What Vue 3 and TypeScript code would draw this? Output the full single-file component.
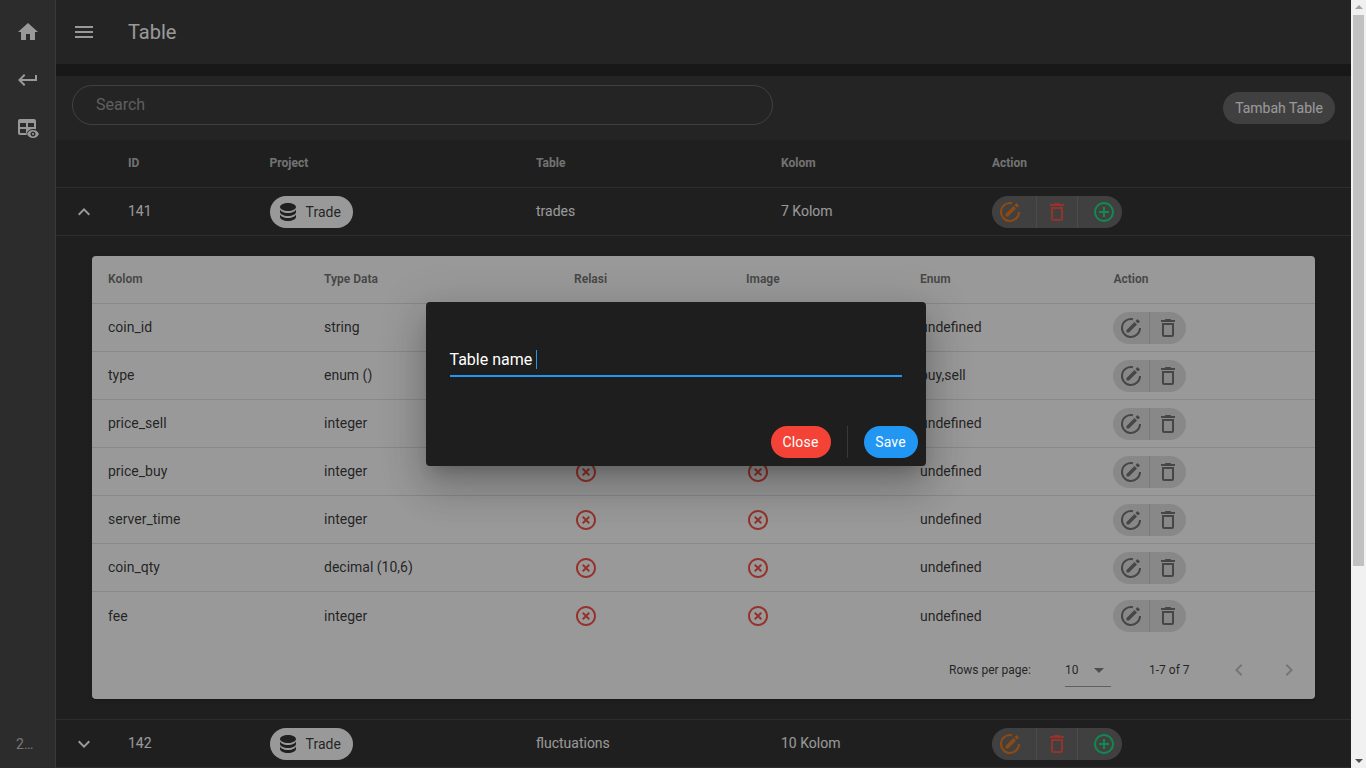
<script setup lang="ts">
interface Column { name: string; type: string; enumValue: string }

const icons = {
  home: 'M10,20V14H14V20H19V12H22L12,3L2,12H5V20H10Z',
  back: 'M19,7V11H5.83L9.41,7.41L8,6L2,12L8,18L9.41,16.59L5.83,13H21V7H19Z',
  tableEye: 'M4 3H18A2 2 0 0 1 20 5V13.2C19.1 13 18 12.9 17 12.9C14.3 12.9 12 14.4 10.7 17V19H4A2 2 0 0 1 2 17V5A2 2 0 0 1 4 3Z M4 7V11H10V7H4Z M12 7V11H18V7H12Z M4 13V17H10V13H4Z M17 16.88C17.56 16.88 18 17.32 18 17.88S17.56 18.88 17 18.88 16 18.44 16 17.88 16.44 16.88 17 16.88M17 14C14.27 14 11.94 15.66 11 18C11.94 20.34 14.27 22 17 22S22.06 20.34 23 18C22.06 15.66 19.73 14 17 14M17 20.5C15.62 20.5 14.5 19.38 14.5 18S15.62 15.5 17 15.5 19.5 16.62 19.5 18 18.38 20.5 17 20.5Z',
  menu: 'M3,6H21V8H3V6M3,11H21V13H3V11M3,16H21V18H3V16Z',
  up: 'M7.41,15.41L12,10.83L16.59,15.41L18,14L12,8L6,14L7.41,15.41Z',
  down: 'M7.41,8.58L12,13.17L16.59,8.58L18,10L12,16L6,10L7.41,8.58Z',
  left: 'M15.41,16.58L10.83,12L15.41,7.41L14,6L8,12L14,18L15.41,16.58Z',
  right: 'M8.59,16.58L13.17,12L8.59,7.41L10,6L16,12L10,18L8.59,16.58Z',
  menuDown: 'M7,10L12,15L17,10H7Z',
  database: 'M12,3C7.58,3 4,4.79 4,7C4,9.21 7.58,11 12,11C16.42,11 20,9.21 20,7C20,4.79 16.42,3 12,3M4,9V12C4,14.21 7.58,16 12,16C16.42,16 20,14.21 20,12V9C20,11.21 16.42,13 12,13C7.58,13 4,11.21 4,9M4,14V17C4,19.21 7.58,21 12,21C16.42,21 20,19.21 20,17V14C20,16.21 16.42,18 12,18C7.58,18 4,16.21 4,14Z',
  trash: 'M6,19A2,2 0 0,0 8,21H16A2,2 0 0,0 18,19V7H6V19M8,9H16V19H8V9M15.5,4L14.5,3H9.5L8.5,4H5V6H19V4H15.5Z',
  plus: 'M12,20C7.59,20 4,16.41 4,12C4,7.59 7.59,4 12,4C16.41,4 20,7.59 20,12C20,16.41 16.41,20 12,20M12,2A10,10 0 0,0 2,12A10,10 0 0,0 12,22A10,10 0 0,0 22,12A10,10 0 0,0 12,2M13,7H11V11H7V13H11V17H13V13H17V11H13V7Z',
  cross: 'M12,20C7.59,20 4,16.41 4,12C4,7.59 7.59,4 12,4C16.41,4 20,7.59 20,12C20,16.41 16.41,20 12,20M12,2C6.47,2 2,6.47 2,12C2,17.53 6.47,22 12,22C17.53,22 22,17.53 22,12C22,6.47 17.53,2 12,2M14.59,8L12,10.59L9.41,8L8,9.41L10.59,12L8,14.59L9.41,16L12,13.41L14.59,16L16,14.59L13.41,12L16,9.41L14.59,8Z',
  editArc: 'M14 3.2A9 9 0 1 0 21 12',
  editPen: 'M7.5 16.5V14L15.5 6L18 8.5L10 16.5Z M16.5 5L18.5 3L21 5.5L19 7.5Z',
}

const columns: Column[] = [
  { name: 'coin_id', type: 'string', enumValue: 'undefined' },
  { name: 'type', type: 'enum ()', enumValue: 'buy,sell' },
  { name: 'price_sell', type: 'integer', enumValue: 'undefined' },
  { name: 'price_buy', type: 'integer', enumValue: 'undefined' },
  { name: 'server_time', type: 'integer', enumValue: 'undefined' },
  { name: 'coin_qty', type: 'decimal (10,6)', enumValue: 'undefined' },
  { name: 'fee', type: 'integer', enumValue: 'undefined' },
]
</script>

<template>
  <div class="app">
    <div class="workspace">
      <nav class="rail">
        <div class="rail-top">
          <svg class="icon" viewBox="0 0 24 24"><path :d="icons.home" /></svg>
          <svg class="icon" viewBox="0 0 24 24"><path :d="icons.back" /></svg>
          <svg class="icon" viewBox="0 0 24 24"><path fill-rule="evenodd" :d="icons.tableEye" /></svg>
        </div>
        <div class="rail-version">2.0.1</div>
      </nav>

      <main class="main">
        <header class="toolbar">
          <svg class="icon" viewBox="0 0 24 24"><path :d="icons.menu" /></svg>
          <h1 class="title">Table</h1>
        </header>

        <section class="panel">
          <div class="filter">
            <div class="search">Search</div>
            <button class="add-btn" type="button">Tambah Table</button>
          </div>

          <table class="outer">
            <colgroup>
              <col class="o1" /><col class="o2" /><col class="o3" /><col class="o4" /><col class="o5" /><col />
            </colgroup>
            <thead>
              <tr>
                <th></th><th>ID</th><th>Project</th><th>Table</th><th>Kolom</th><th>Action</th>
              </tr>
            </thead>
            <tbody>
              <tr>
                <td><svg class="icon" viewBox="0 0 24 24"><path :d="icons.up" /></svg></td>
                <td>141</td>
                <td>
                  <span class="chip"><svg class="icon" viewBox="0 0 24 24"><path :d="icons.database" /></svg>Trade</span>
                </td>
                <td>trades</td>
                <td>7 Kolom</td>
                <td>
                  <div class="group">
                    <button class="g-btn g-first" type="button">
                      <svg class="icon orange" viewBox="0 0 24 24"><path class="arc" :d="icons.editArc" /><path :d="icons.editPen" /></svg>
                    </button>
                    <button class="g-btn g-mid" type="button">
                      <svg class="icon red" viewBox="0 0 24 24"><path :d="icons.trash" /></svg>
                    </button>
                    <button class="g-btn g-last" type="button">
                      <svg class="icon green" viewBox="0 0 24 24"><path :d="icons.plus" /></svg>
                    </button>
                  </div>
                </td>
              </tr>

              <tr>
                <td class="expanded" colspan="6">
                  <div class="card">
                    <table class="inner">
                      <colgroup>
                        <col class="i1" /><col class="i2" /><col class="i3" /><col class="i4" /><col class="i5" /><col />
                      </colgroup>
                      <thead>
                        <tr>
                          <th>Kolom</th><th>Type Data</th><th>Relasi</th><th>Image</th><th>Enum</th><th>Action</th>
                        </tr>
                      </thead>
                      <tbody>
                        <tr v-for="c in columns" :key="c.name">
                          <td>{{ c.name }}</td>
                          <td>{{ c.type }}</td>
                          <td><svg class="icon red" viewBox="0 0 24 24"><path :d="icons.cross" /></svg></td>
                          <td><svg class="icon red" viewBox="0 0 24 24"><path :d="icons.cross" /></svg></td>
                          <td>{{ c.enumValue }}</td>
                          <td>
                            <div class="group light">
                              <button class="g-btn l-first" type="button">
                                <svg class="icon" viewBox="0 0 24 24"><path class="arc" :d="icons.editArc" /><path :d="icons.editPen" /></svg>
                              </button>
                              <button class="g-btn l-last" type="button">
                                <svg class="icon" viewBox="0 0 24 24"><path :d="icons.trash" /></svg>
                              </button>
                            </div>
                          </td>
                        </tr>
                      </tbody>
                    </table>
                    <footer class="pager">
                      <span class="pager-label">Rows per page:</span>
                      <div class="pager-select">
                        <span>10</span>
                        <svg class="icon" viewBox="0 0 24 24"><path :d="icons.menuDown" /></svg>
                      </div>
                      <span class="pager-range">1-7 of 7</span>
                      <svg class="icon pager-nav" viewBox="0 0 24 24"><path :d="icons.left" /></svg>
                      <svg class="icon pager-nav pager-next" viewBox="0 0 24 24"><path :d="icons.right" /></svg>
                    </footer>
                  </div>
                </td>
              </tr>

              <tr>
                <td><svg class="icon" viewBox="0 0 24 24"><path :d="icons.down" /></svg></td>
                <td>142</td>
                <td>
                  <span class="chip"><svg class="icon" viewBox="0 0 24 24"><path :d="icons.database" /></svg>Trade</span>
                </td>
                <td>fluctuations</td>
                <td>10 Kolom</td>
                <td>
                  <div class="group">
                    <button class="g-btn g-first" type="button">
                      <svg class="icon orange" viewBox="0 0 24 24"><path class="arc" :d="icons.editArc" /><path :d="icons.editPen" /></svg>
                    </button>
                    <button class="g-btn g-mid" type="button">
                      <svg class="icon red" viewBox="0 0 24 24"><path :d="icons.trash" /></svg>
                    </button>
                    <button class="g-btn g-last" type="button">
                      <svg class="icon green" viewBox="0 0 24 24"><path :d="icons.plus" /></svg>
                    </button>
                  </div>
                </td>
              </tr>
            </tbody>
          </table>
        </section>
      </main>

      <div class="scrim">
        <div class="dialog">
          <div class="dialog-body">
            <div class="field">
              <span>Table name</span><span class="caret"></span>
            </div>
          </div>
          <div class="dialog-actions">
            <button class="d-btn d-close" type="button">Close</button>
            <span class="d-divider"></span>
            <button class="d-btn d-save" type="button">Save</button>
          </div>
        </div>
      </div>
    </div>

    <div class="scrollbar">
      <span class="arrow arrow-up"></span>
      <div class="track"><div class="thumb"></div></div>
      <span class="arrow arrow-down"></span>
    </div>
  </div>
</template>

<style>
body {
  margin: 0;
  background: #121212;
}
</style>

<style scoped>
.app {
  display: flex;
  height: 100vh;
  overflow: hidden;
  font-family: Roboto, "Liberation Sans", sans-serif;
  font-size: 14px;
  line-height: 1.5;
  color: #fff;
}
.workspace {
  position: relative;
  flex: 1;
  min-width: 0;
  display: flex;
}
.icon {
  display: block;
  width: 24px;
  height: 24px;
  fill: currentColor;
  flex: none;
}
.arc {
  fill: none;
  stroke: currentColor;
  stroke-width: 2;
}
.rail {
  flex: none;
  box-sizing: border-box;
  width: 56px;
  background: #363636;
  border-right: 1px solid rgba(255, 255, 255, 0.12);
  display: flex;
  flex-direction: column;
  justify-content: space-between;
}
.rail-top {
  display: flex;
  flex-direction: column;
  gap: 24px;
  padding: 20px 0 0 16px;
}
.rail-version {
  width: 17px;
  margin: 0 0 16px 16px;
  line-height: 16px;
  color: rgba(255, 255, 255, 0.7);
  overflow: hidden;
  white-space: nowrap;
  text-overflow: ellipsis;
}
.main {
  flex: 1;
  min-width: 0;
}
.toolbar {
  height: 64px;
  background: #272727;
  display: flex;
  align-items: center;
  padding-left: 16px;
  gap: 32px;
}
.title {
  margin: 0;
  font-size: 20px;
  font-weight: 400;
  line-height: 32px;
}
.panel {
  margin-top: 12px;
  background: #1e1e1e;
}
.filter {
  height: 64px;
  background: #272727;
  display: flex;
  justify-content: space-between;
  align-items: flex-start;
  padding: 0 16px;
}
.search {
  box-sizing: border-box;
  width: 701px;
  height: 40px;
  margin-top: 9px;
  padding-left: 23px;
  border: 1px solid rgba(255, 255, 255, 0.24);
  border-radius: 20px;
  font-size: 16px;
  line-height: 37px;
  color: rgba(255, 255, 255, 0.5);
}
.add-btn {
  width: 112px;
  height: 32px;
  margin-top: 16px;
  padding: 0;
  border: 0;
  border-radius: 16px;
  background: #5c5c5c;
  color: #fff;
  font: inherit;
}
table {
  width: 100%;
  border-collapse: separate;
  border-spacing: 0;
  table-layout: fixed;
}
th {
  box-sizing: border-box;
  height: 48px;
  padding: 0 16px 2px;
  text-align: left;
  font-size: 12px;
  font-weight: 700;
}
td {
  box-sizing: border-box;
  height: 48px;
  padding: 0 16px;
}
.outer > thead th {
  color: rgba(255, 255, 255, 0.7);
  border-bottom: 1px solid rgba(255, 255, 255, 0.12);
}
.outer > tbody > tr > td {
  border-bottom: 1px solid rgba(255, 255, 255, 0.12);
}
.o1 { width: 56px; }
.o2 { width: 141.6px; }
.o3 { width: 266.4px; }
.o4 { width: 245px; }
.o5 { width: 211px; }
.chip {
  display: inline-flex;
  align-items: center;
  gap: 6px;
  height: 32px;
  padding: 0 12px 0 6px;
  border-radius: 16px;
  background: #fff;
  color: rgba(0, 0, 0, 0.87);
  line-height: normal;
  vertical-align: middle;
}
.group {
  display: inline-flex;
  height: 32px;
  vertical-align: middle;
  border-radius: 16px;
  background: #5c5c5c;
}
.g-btn {
  display: flex;
  align-items: center;
  justify-content: center;
  box-sizing: border-box;
  height: 32px;
  padding: 0;
  border: 0;
  background: none;
  color: inherit;
}
.g-first { width: 45px; padding-right: 8px; border-right: 1px solid rgba(255, 255, 255, 0.12); }
.g-mid { width: 41px; border-right: 1px solid rgba(255, 255, 255, 0.12); }
.g-last { width: 44px; padding-left: 8px; }
.orange { color: #ef6c00; }
.red { color: #f44336; }
.green { color: #00e676; }
.outer > tbody > tr > td.expanded {
  height: 484px;
  padding: 20px 36px;
  vertical-align: top;
}
.card {
  background: #fff;
  border-radius: 4px;
  color: rgba(0, 0, 0, 0.87);
  box-shadow: 0 3px 1px -2px rgba(0, 0, 0, 0.2), 0 2px 2px 0 rgba(0, 0, 0, 0.14), 0 1px 5px 0 rgba(0, 0, 0, 0.12);
}
.i1 { width: 216px; }
.i2 { width: 250px; }
.i3 { width: 172px; }
.i4 { width: 174px; }
.i5 { width: 193.4px; }
.inner th {
  color: rgba(0, 0, 0, 0.6);
  border-bottom: 1px solid rgba(0, 0, 0, 0.12);
}
.inner tbody td {
  border-bottom: 1px solid rgba(0, 0, 0, 0.12);
}
.inner tbody tr:last-child td {
  border-bottom: 0;
}
.group.light {
  background: rgba(0, 0, 0, 0.12);
  color: rgba(0, 0, 0, 0.54);
}
.l-first { width: 37px; border-right: 1px solid rgba(0, 0, 0, 0.12); }
.l-last { width: 36px; }
.pager {
  display: flex;
  align-items: center;
  height: 59px;
  padding-left: 857px;
  font-size: 12px;
}
.pager-label {
  width: 116px;
}
.pager-select {
  box-sizing: border-box;
  width: 46px;
  height: 34px;
  display: flex;
  align-items: center;
  justify-content: space-between;
  border-bottom: 1px solid rgba(0, 0, 0, 0.42);
  margin-top: 1px;
}
.pager-select .icon {
  color: rgba(0, 0, 0, 0.54);
}
.pager-range {
  width: 78px;
  margin-left: 38px;
}
.pager-nav {
  color: rgba(0, 0, 0, 0.26);
}
.pager-next {
  margin-left: 26px;
}
.scrim {
  position: absolute;
  inset: 0;
  display: flex;
  align-items: center;
  justify-content: center;
  background: rgba(33, 33, 33, 0.46);
}
.dialog {
  width: 500px;
  height: 164px;
  background: #1e1e1e;
  border-radius: 4px;
  display: flex;
  flex-direction: column;
  justify-content: space-between;
  box-shadow: 0 11px 15px -7px rgba(0, 0, 0, 0.2), 0 24px 38px 3px rgba(0, 0, 0, 0.14), 0 9px 46px 8px rgba(0, 0, 0, 0.12);
}
.dialog-body {
  padding: 44px 24px 0;
}
.field {
  display: flex;
  align-items: center;
  box-sizing: border-box;
  height: 31px;
  padding-bottom: 3px;
  border-bottom: 2px solid #2196f3;
  font-size: 16px;
  line-height: normal;
}
.caret {
  width: 1px;
  height: 19px;
  margin-left: 4px;
  background: #2196f3;
}
.dialog-actions {
  display: flex;
  justify-content: flex-end;
  align-items: center;
  padding: 8px;
}
.d-btn {
  height: 32px;
  padding: 0;
  border: 0;
  border-radius: 16px;
  color: #fff;
  font: inherit;
  letter-spacing: 0.2px;
}
.d-close { width: 60px; background: #f44336; }
.d-save { width: 54px; background: #2196f3; }
.d-divider {
  width: 1px;
  height: 32px;
  margin: 0 16px;
  background: rgba(255, 255, 255, 0.12);
}
.scrollbar {
  flex: none;
  width: 15px;
  display: flex;
  flex-direction: column;
  align-items: center;
  background: #f1f1f1;
}
.arrow {
  flex: none;
  width: 0;
  height: 0;
  border-left: 4px solid transparent;
  border-right: 4px solid transparent;
}
.arrow-up {
  margin: 5px 0 6px;
  border-bottom: 4px solid #a3a3a3;
}
.arrow-down {
  margin: 6px 0 5px;
  border-top: 4px solid #505050;
}
.track {
  flex: 1;
  width: 100%;
  display: flex;
  justify-content: center;
}
.thumb {
  width: 11px;
  height: 551px;
  background: #c1c1c1;
}
</style>
